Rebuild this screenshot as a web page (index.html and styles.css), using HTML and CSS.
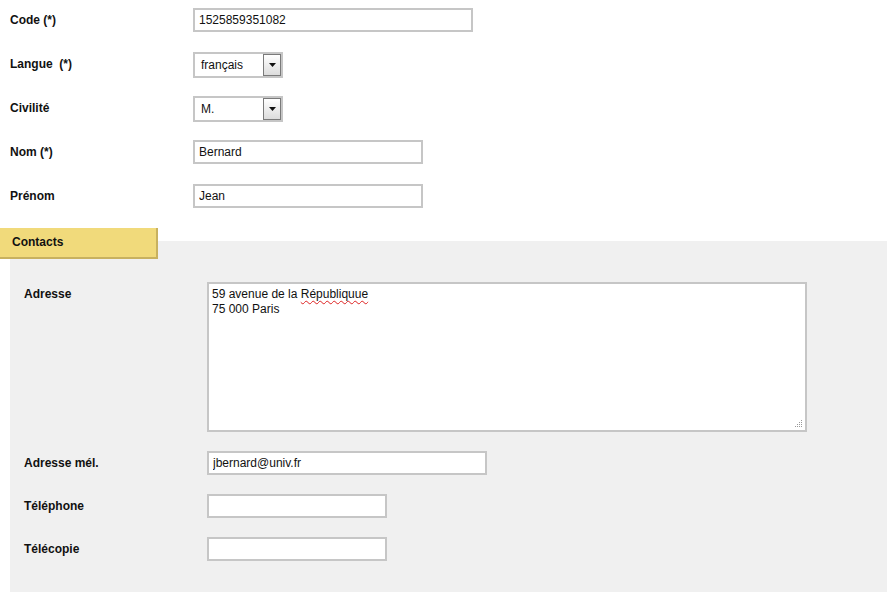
FILE: index.html
```html
<!DOCTYPE html>
<html lang="fr">
<head>
<meta charset="utf-8">
<title>Fiche</title>
<link rel="stylesheet" href="styles.css">
</head>
<body>
<form class="form">
  <div class="main">
    <div class="row">
      <label class="lbl">Code (*)</label>
      <div class="field"><input class="inp w280" type="text" value="1525859351082"></div>
    </div>
    <div class="row">
      <label class="lbl">Langue&nbsp; (*)</label>
      <div class="field">
        <div class="sel"><span class="sel-val">français</span><span class="sel-btn"><svg width="7" height="4" viewBox="0 0 7 4"><path d="M0 0H7L3.5 4Z" fill="#111"/></svg></span></div>
      </div>
    </div>
    <div class="row">
      <label class="lbl">Civilité</label>
      <div class="field">
        <div class="sel"><span class="sel-val">M.</span><span class="sel-btn"><svg width="7" height="4" viewBox="0 0 7 4"><path d="M0 0H7L3.5 4Z" fill="#111"/></svg></span></div>
      </div>
    </div>
    <div class="row">
      <label class="lbl">Nom (*)</label>
      <div class="field"><input class="inp w230" type="text" value="Bernard"></div>
    </div>
    <div class="row">
      <label class="lbl">Prénom</label>
      <div class="field"><input class="inp w230" type="text" value="Jean"></div>
    </div>
  </div>

  <div class="section">
    <div class="tab">Contacts</div>
    <div class="panel">
      <div class="row row-top">
        <label class="lbl">Adresse</label>
        <div class="field"><div class="area">59 avenue de la <span class="typo">Républiquue</span><br>75 000 Paris<span class="grip"><svg width="8" height="8" viewBox="0 0 8 8"><g fill="#999"><rect x="6" y="0" width="1" height="1"/><rect x="4" y="2" width="1" height="1"/><rect x="6" y="2" width="1" height="1"/><rect x="2" y="4" width="1" height="1"/><rect x="4" y="4" width="1" height="1"/><rect x="6" y="4" width="1" height="1"/><rect x="0" y="6" width="1" height="1"/><rect x="2" y="6" width="1" height="1"/><rect x="4" y="6" width="1" height="1"/><rect x="6" y="6" width="1" height="1"/></g></svg></span></div></div>
      </div>
      <div class="row">
        <label class="lbl">Adresse mél.</label>
        <div class="field"><input class="inp w280" type="text" value="jbernard@univ.fr"></div>
      </div>
      <div class="row">
        <label class="lbl">Téléphone</label>
        <div class="field"><input class="inp w180" type="text" value=""></div>
      </div>
      <div class="row last">
        <label class="lbl">Télécopie</label>
        <div class="field"><input class="inp w180" type="text" value=""></div>
      </div>
    </div>
  </div>
</form>
</body>
</html>
```
FILE: styles.css
```css
html, body {
  margin: 0;
  padding: 0;
  background: #fff;
}
body {
  font-family: "Liberation Sans", Arial, sans-serif;
  font-size: 12px;
  color: #111;
  width: 887px;
  height: 592px;
  overflow: hidden;
}
.form {
  margin: 0;
}
.main {
  padding: 8px 0 0 10px;
}
.row {
  display: flex;
  align-items: center;
  height: 24px;
  margin-bottom: 20px;
}
.row-top {
  align-items: flex-start;
  height: 150px;
}
.lbl {
  width: 183px;
  flex: none;
  font-weight: bold;
  font-size: 12px;
  color: #111;
}
.row-top .lbl {
  padding-top: 5px;
}
.field {
  display: flex;
}
.inp {
  box-sizing: border-box;
  height: 24px;
  border: 2px solid #c6c6c6;
  background: #fff;
  padding: 0 4px;
  font-family: "Liberation Sans", Arial, sans-serif;
  font-size: 12px;
  color: #111;
  outline: none;
  margin: 0;
}
.w280 { width: 280px; }
.w230 { width: 230px; }
.w180 { width: 180px; }

.sel {
  box-sizing: border-box;
  width: 90px;
  height: 26px;
  border: 2px solid #c6c6c6;
  background: #fff;
  display: flex;
  align-items: center;
  justify-content: space-between;
  margin-top: 1px;
}
.sel-val {
  padding-left: 6px;
  font-size: 12px;
}
.sel-btn {
  box-sizing: border-box;
  width: 18px;
  height: 22px;
  border: 1px solid #7a7a7a;
  background: linear-gradient(#ffffff, #dcdcdc);
  display: flex;
  align-items: center;
  justify-content: center;
}

.section {
  display: flex;
  flex-direction: column;
}
.tab {
  box-sizing: border-box;
  width: 158px;
  height: 31px;
  background: #f1da7b;
  border-right: 2px solid #c8b15f;
  border-bottom: 2px solid #c8b15f;
  font-weight: bold;
  font-size: 12px;
  padding: 7px 0 0 12px;
  position: relative;
  z-index: 1;
}
.panel {
  margin: -18px 0 0 10px;
  background: #f0f0f0;
  padding: 41px 0 34px 14px;
}
.panel .row {
  margin-bottom: 19px;
}
.panel .row.last {
  margin-bottom: 0;
}
.area {
  box-sizing: border-box;
  width: 600px;
  height: 150px;
  border: 2px solid #c6c6c6;
  background: #fff;
  padding: 3px 3px;
  font-size: 12px;
  line-height: 15px;
  position: relative;
}
.typo {
  text-decoration: underline wavy #d22;
  text-decoration-thickness: 1px;
  text-underline-offset: 2px;
}
.grip {
  position: absolute;
  right: 2px;
  bottom: 2px;
  width: 8px;
  height: 8px;
  display: flex;
}
```
